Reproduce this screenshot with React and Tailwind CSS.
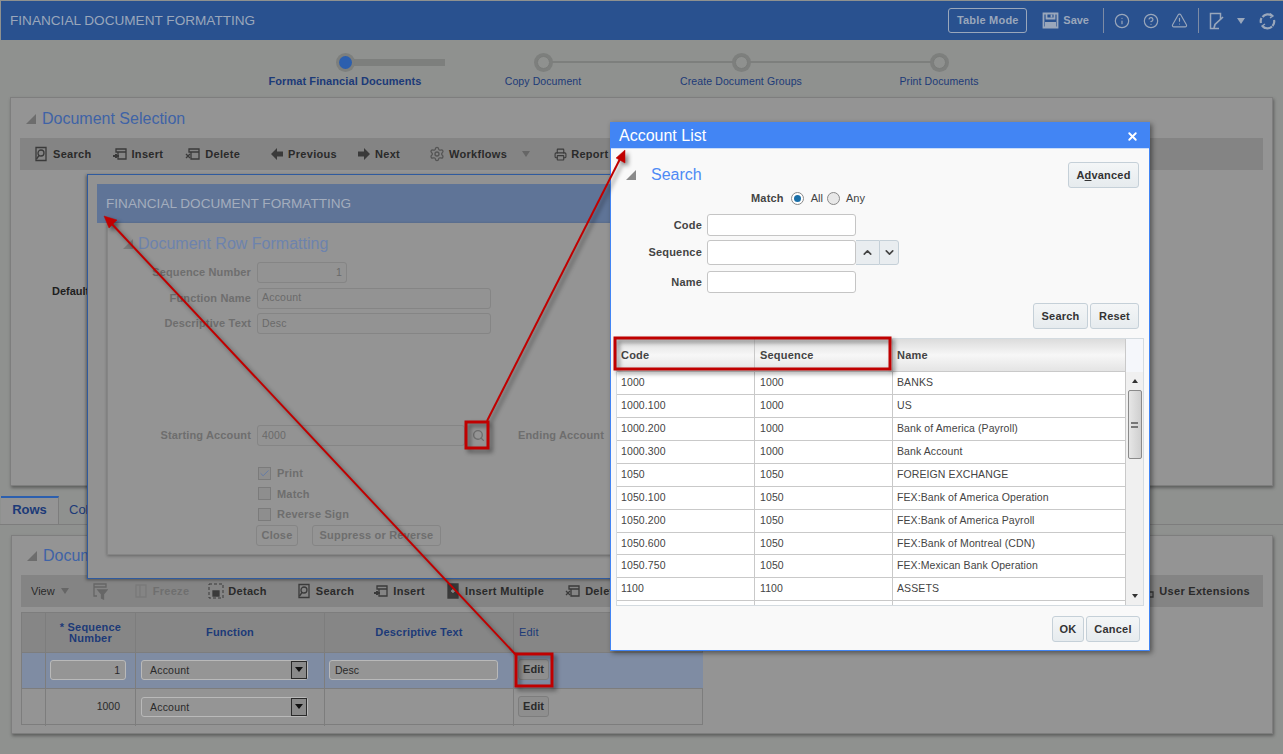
import React from "react";
import { Search, Info, CircleHelp, TriangleAlert, Printer, Settings, X, ChevronUp, ChevronDown, Check } from "lucide-react";

const Doc = ({ c = "#3a3a3a", kind = "search" }) => (
  <svg width="16" height="16" viewBox="0 0 16 16" fill="none" stroke={c} strokeWidth="1.3">
    {kind === "search" && <><path d="M3 1.5h10v13H3z" /><circle cx="8" cy="7" r="3" /><path d="M6 9.5l-2.5 3.5" /></>}
    {kind === "insert" && <><path d="M4 3h10v3H4zM6 6v7h8V6" /><path d="M1 10h6M4 8v4" strokeWidth="2" /></>}
    {kind === "delete" && <><path d="M4 3h10v3H4zM6 6v7h8V6" /><path d="M1 8l4 4M5 8l-4 4" /></>}
    {kind === "multi" && <><path d="M3 1h10v14H3z" fill={c} /><path d="M6 8h4M8 6v4" stroke="#949494" /></>}
    {kind === "detach" && <><path d="M1 1h14v14H1z" strokeDasharray="3 2" strokeWidth="1" /><path d="M5 8h6v5H5z" fill={c} /></>}
    {kind === "freeze" && <><path d="M3 2h10v12H3zM7 2v12" opacity=".5" /></>}
    {kind === "ext" && <><path d="M2 2h5v4H2zM8 9h6v5H8zM4 6v5h4" /></>}
  </svg>
);

const BlockArrow = ({ dir }) => (
  <svg width="14" height="14" viewBox="0 0 14 14" fill="#3a3a3a">
    {dir === "left" ? <path d="M1 7l6-6v3.5h6v5H7V13z" /> : <path d="M13 7L7 1v3.5H1v5h6V13z" />}
  </svg>
);

const Floppy = () => (
  <svg width="17" height="17" viewBox="0 0 17 17" fill="none" stroke="#9aa7bb" strokeWidth="1.8" className="ml-[15px]">
    <path d="M1.5 1.5h14v14h-14z" />
    <path d="M4.5 1.5v5h8v-5" />
    <path d="M3 10h11v5H3z" fill="#9aa7bb" stroke="none" />
    <path d="M9.5 2.5v3" />
  </svg>
);

const PenDoc = () => (
  <svg width="16" height="18" viewBox="0 0 16 18" fill="none" stroke="#9aa7bb" strokeWidth="1.5" className="ml-[10px]">
    <path d="M10 16.5H1.5v-15h10v6" />
    <path d="M5 16l1-3.5L14 5" strokeWidth="1.7" />
  </svg>
);

const Refresh = () => (
  <svg width="17" height="18" viewBox="0 0 17 18" fill="none" stroke="#9aa7bb" strokeWidth="2.2" className="ml-[14px]">
    <path d="M3.5 5A6.5 6.5 0 0 1 13 4M15 8a6.5 6.5 0 0 1-1.5 6M13 14.5A6.5 6.5 0 0 1 3.5 14M2 11a6.5 6.5 0 0 1 .5-5" />
    <path d="M11 1.5l3 2.5-3 2M6 16.5l-3-2.5 3-2" strokeWidth="1.4" />
  </svg>
);

const FilterDoc = () => (
  <svg width="15" height="17" viewBox="0 0 15 17" fill="none" stroke="#666666" strokeWidth="1.3" className="ml-[24px]">
    <path d="M1 1h12v3H1zM1 4v9h3" />
    <path d="M5 7h9l-3.5 4v5l-2-1v-4z" fill="#666666" />
  </svg>
);

const Tool = ({ icon, label, cls = "", dim = false }) => (
  <div className={`flex items-center gap-[4px] ${cls}`}>
    {icon}
    <span className={`text-[11px] font-bold tracking-[0.3px] ${dim ? "text-[#6f6f6f]" : "text-[#2a2a2a]"}`}>{label}</span>
  </div>
);

const Step = ({ label, active, line }) => (
  <div className="relative flex w-[198px] flex-col items-center">
    <div className="relative z-10 flex h-[19px] w-[19px] items-center justify-center rounded-full bg-[#7d7f7d]">
      <div className={`h-[13px] w-[13px] rounded-full ${active ? "bg-[#2c5fae]" : "border border-[#7a7c7a] bg-[#8f918f]"}`} />
    </div>
    {line && <div className="absolute left-[99px] top-[8px] h-[2px] w-[198px] bg-[#7d7f7d]" />}
    {active && <div className="absolute left-[99px] top-[6px] h-[7px] w-[100px] bg-[#7d7f7d]" />}
    <div className={`mt-[2px] whitespace-nowrap leading-[14px] text-[#1c3a78] ${active ? "text-[11px] font-bold tracking-[0.08px]" : "text-[10.5px] tracking-[0.1px]"}`}>{label}</div>
  </div>
);

const Tri = ({ c = "#6d6d6d" }) => <div className="h-0 w-0 border-l-[10px] border-l-transparent" style={{ borderBottom: `10px solid ${c}` }} />;

const GField = ({ label, v, w, right }) => (
  <div className="flex items-center">
    <div className="w-[149px] pr-[6px] text-right text-[11px] font-bold tracking-[0.15px] text-[#6e6e6e]">{label}</div>
    <div className={`flex h-[21px] items-center rounded-[3px] border border-[#858585] bg-[#939393] px-[4px] text-[10.5px] tracking-[0.2px] text-[#6a6a6a] ${w} ${right ? "justify-end" : ""}`}>{v}</div>
  </div>
);

const GCheck = ({ label, checked }) => (
  <div className="flex h-[20.5px] items-center gap-[6px]">
    <div className="flex h-[13px] w-[13px] items-center justify-center border border-[#7b7b7b] bg-[#8e8e8e]">{checked && <Check size={11} color="#6079a8" strokeWidth={2} />}</div>
    <span className="text-[11px] font-bold tracking-[0.2px] text-[#6e6e6e]">{label}</span>
  </div>
);

const Select = () => (
  <div className="flex h-[20px] w-[167px] items-stretch rounded-[3px] border border-[#b9b9b9] bg-[#959595]">
    <div className="flex-1 pl-[8px] text-[10.5px] leading-[18px] tracking-[0.2px] text-[#2a2a2a]">Account</div>
    <div className="flex w-[16px] items-center justify-center border border-[#2a2a2a] bg-[#8a8a8a]">
      <div className="h-0 w-0 border-x-[4px] border-t-[5px] border-x-transparent border-t-[#111111]" />
    </div>
  </div>
);

const HCell = ({ children, cls = "" }) => (
  <div className={`flex items-center justify-center border-r border-[#7d7d7d] text-center text-[11px] font-bold leading-[11px] tracking-[0.2px] text-[#1c3a78] ${cls}`}>{children}</div>
);

const MBtn = ({ children, cls = "" }) => (
  <button className={`flex h-[26px] items-center justify-center rounded-[3px] border border-[#c5d0d8] bg-gradient-to-b from-[#f4f6f7] to-[#e6ebee] text-[11px] font-bold tracking-[0.2px] text-[#333333] ${cls}`}>{children}</button>
);

const MField = ({ label, h = "h-[22px]" }) => (
  <div className="flex items-center">
    <div className="w-[96px] pr-[5px] text-right text-[11px] font-bold tracking-[0.2px] text-[#444444]">{label}</div>
    <div className={`w-[149px] rounded-[3px] border border-[#c5c5c5] bg-white ${h}`} />
  </div>
);

const rows = [
  ["1000", "1000", "BANKS"],
  ["1000.100", "1000", "US"],
  ["1000.200", "1000", "Bank of America (Payroll)"],
  ["1000.300", "1000", "Bank Account"],
  ["1050", "1050", "FOREIGN EXCHANGE"],
  ["1050.100", "1050", "FEX:Bank of America Operation"],
  ["1050.200", "1050", "FEX:Bank of America Payroll"],
  ["1050.600", "1050", "FEX:Bank of Montreal (CDN)", true],
  ["1050.750", "1050", "FEX:Mexican Bank Operation"],
  ["1100", "1100", "ASSETS"],
];

export default function App() {
  return (
    <div className="relative h-[754px] w-[1283px] overflow-hidden bg-[#8f918f] font-['Liberation_Sans',Arial,sans-serif]">
      {/* header */}
      <div className="mt-[1px] ml-[1px] flex h-[39px] items-center bg-[#29518f] pl-[9px] pr-[7px]">
        <div className="pt-[2px] text-[13.6px] text-[#9aa7bb]">FINANCIAL DOCUMENT FORMATTING</div>
        <div className="ml-auto flex items-center text-[#9aa7bb]">
          <div className="flex h-[25px] w-[79px] items-center justify-center rounded-[3px] border border-[#9aa7bb] text-[11px] font-bold tracking-[0.2px]">Table Mode</div>
          <Floppy />
          <span className="ml-[4px] text-[11px] font-bold">Save</span>
          <div className="ml-[14px] h-[25px] w-px bg-[#7c8ba5]" />
          <Info size={16} strokeWidth={1.8} className="ml-[10px]" />
          <CircleHelp size={16} strokeWidth={1.8} className="ml-[13px]" />
          <TriangleAlert size={17} strokeWidth={1.6} className="ml-[12px]" />
          <div className="ml-[10px] h-[25px] w-px bg-[#7c8ba5]" />
          <PenDoc />
          <div className="ml-[12px] h-0 w-0 border-x-[4px] border-t-[6px] border-x-transparent border-t-[#9aa7bb]" />
          <Refresh />
        </div>
      </div>
      {/* stepper */}
      <div className="flex h-[57px] pl-[246px] pt-[13px]">
        <Step label="Format Financial Documents" active />
        <Step label="Copy Document" line />
        <Step label="Create Document Groups" line />
        <Step label="Print Documents" />
      </div>
      {/* selection panel */}
      <div className="ml-[10px] h-[389px] w-[1263px] border border-[#7e7e7e] bg-[#949494] px-[9px] shadow-[1px_2px_3px_rgba(0,0,0,0.35)]">
        <div className="flex h-[40px] items-center gap-[6px] pl-[6px] pt-[1px]">
          <Tri />
          <div className="text-[16px] text-[#3f63a6]">Document Selection</div>
        </div>
        <div className="flex h-[32px] items-center bg-[#848484] pl-[13px]">
          <Tool icon={<Doc />} label="Search" />
          <Tool icon={<Doc kind="insert" />} label="Insert" cls="ml-[20px]" />
          <Tool icon={<Doc kind="delete" />} label="Delete" cls="ml-[22px]" />
          <Tool icon={<BlockArrow dir="left" />} label="Previous" cls="ml-[30px]" />
          <Tool icon={<BlockArrow dir="right" />} label="Next" cls="ml-[20px]" />
          <Tool icon={<Settings size={16} color="#555555" />} label="Workflows" cls="ml-[29px]" />
          <div className="ml-[15px] h-0 w-0 border-x-[4px] border-t-[6px] border-x-transparent border-t-[#666666]" />
          <Tool icon={<Printer size={13} color="#3a3a3a" />} label="Report Options" cls="ml-[24px]" />
        </div>
        <div className="ml-[32px] mt-[113px] text-[11px] font-bold text-[#1e1e1e]">Default</div>
      </div>
      {/* tabs */}
      <div className="mt-[10px] flex h-[29px] border-b border-[#7d7d7d]">
        <div className="ml-[1px] flex w-[58px] items-center justify-center border-r border-t-2 border-[#7d7d7d] border-t-[#2c5fae] bg-[#949494] pb-[2px] text-[13px] font-bold text-[#1c3a78]">Rows</div>
        <div className="flex w-[100px] items-center pb-[1px] pl-[10px] text-[13px] text-[#1c3a78]">Columns</div>
      </div>
      {/* rows panel */}
      <div className="ml-[11px] mt-[10px] h-[199px] w-[1262px] border border-[#7e7e7e] bg-[#949494] pl-[9px] pr-[9px] shadow-[1px_2px_3px_rgba(0,0,0,0.35)]">
        <div className="flex h-[39px] items-center gap-[6px] pl-[6px]">
          <Tri />
          <div className="text-[16px] text-[#3f63a6]">Document Row Formatting</div>
        </div>
        <div className="flex h-[32px] items-center bg-[#848484] pl-[10px]">
          <span className="text-[11px] text-[#2a2a2a]">View</span>
          <div className="ml-[6px] h-0 w-0 border-x-[4px] border-t-[6px] border-x-transparent border-t-[#666666]" />
          <FilterDoc />
          <Tool icon={<Doc kind="freeze" c="#6f6f6f" />} label="Freeze" dim cls="ml-[25px]" />
          <Tool icon={<Doc kind="detach" />} label="Detach" cls="ml-[19px]" />
          <Tool icon={<Doc />} label="Search" cls="ml-[29px]" />
          <Tool icon={<Doc kind="insert" />} label="Insert" cls="ml-[19px]" />
          <Tool icon={<Doc kind="multi" />} label="Insert Multiple" cls="ml-[20px]" />
          <Tool icon={<Doc kind="delete" />} label="Delete" cls="ml-[21px]" />
          <Tool icon={<Doc kind="ext" />} label="User Extensions" cls="ml-auto mr-[13px]" />
        </div>
        <div className="mt-[5px] grid h-[113px] w-[682px] grid-cols-[24px_90px_189px_189px_189px] grid-rows-[40px_36px_37px] border border-[#7d7d7d]">
          <HCell cls="border-b bg-[#868686]" />
          <HCell cls="border-b bg-[#868686]"><span>* Sequence<br />Number</span></HCell>
          <HCell cls="border-b bg-[#868686]">Function</HCell>
          <HCell cls="border-b bg-[#868686]">Descriptive Text</HCell>
          <HCell cls="justify-start! border-b bg-[#868686] pl-[5px] font-normal!">Edit</HCell>

          <div className="border-r border-b border-[#7d7d7d] bg-[#7f8ca3]" />
          <div className="flex items-center border-r border-b border-[#7d7d7d] bg-[#7f8ca3] pb-[2px] pl-[4px]">
            <div className="h-[20px] w-[76px] rounded-[3px] border border-[#b9b9b9] bg-[#959595] pr-[5px] text-right text-[10.5px] leading-[18px] text-[#2a2a2a]">1</div>
          </div>
          <div className="flex items-center border-r border-b border-[#7d7d7d] bg-[#7f8ca3] pb-[2px] pl-[5px]"><Select /></div>
          <div className="flex items-center border-r border-b border-[#7d7d7d] bg-[#7f8ca3] pb-[2px] pl-[4px]">
            <div className="h-[20px] w-[169px] rounded-[3px] border border-[#b9b9b9] bg-[#959595] pl-[5px] text-[10.5px] leading-[18px] text-[#2a2a2a]">Desc</div>
          </div>
          <div className="flex items-center border-b border-[#7d7d7d] bg-[#7f8ca3] pb-[2px] pl-[4px]">
            <div className="flex h-[21px] w-[31px] items-center justify-center rounded-[3px] border border-[#7d7d7d] bg-[#8e8e8e] text-[11px] font-bold text-[#2a2a2a]">Edit</div>
          </div>

          <div className="border-r border-[#7d7d7d]" />
          <div className="flex items-center justify-end border-r border-[#7d7d7d] pb-[2px] pr-[15px] text-[10.5px] text-[#2a2a2a]">1000</div>
          <div className="flex items-center border-r border-[#7d7d7d] pb-[2px] pl-[5px]"><Select /></div>
          <div className="border-r border-[#7d7d7d]" />
          <div className="flex items-center pb-[2px] pl-[4px]">
            <div className="flex h-[21px] w-[31px] items-center justify-center rounded-[3px] border border-[#7d7d7d] bg-[#8e8e8e] text-[11px] font-bold text-[#2a2a2a]">Edit</div>
          </div>
        </div>
      </div>

      {/* underlying popup */}
      <div className="absolute left-[87px] top-[174px] h-[405px] w-[560px] border border-[#2f5a9e] bg-[#929292] pl-[9px] pt-[9px] shadow-[-1px_1px_3px_rgba(0,0,0,0.4)]">
        <div className="flex h-[39px] items-center bg-[#5f7497] pl-[9px] pt-[2px] text-[13.6px] text-[#a3adbd]">FINANCIAL DOCUMENT FORMATTING</div>
        <div className="ml-[10px] h-[332px] border-l border-b border-[#858585] bg-[#949494] shadow-[0_1px_3px_rgba(0,0,0,0.3)]">
          <div className="flex h-[39px] items-center gap-[5px] pl-[15px] pt-[2px]">
            <Tri c="#7a7a7a" />
            <div className="text-[16px] text-[#6d83ad]">Document Row Formatting</div>
          </div>
          <div className="flex flex-col gap-[4.5px]">
            <GField label="Sequence Number" v="1" w="w-[90px]" right />
            <GField label="Function Name" v="Account" w="w-[234px]" />
            <GField label="Descriptive Text" v="Desc" w="w-[234px]" />
          </div>
          <div className="mt-[91px] flex items-center">
            <GField label="Starting Account" v="4000" w="w-[208px]" />
            <Search size={13} color="#6e6e6e" strokeWidth={2.5} className="ml-[7px]" />
            <div className="ml-[33px] text-[11px] font-bold tracking-[0.15px] text-[#6e6e6e]">Ending Account</div>
          </div>
          <div className="ml-[150px] mt-[17px] flex flex-col">
            <GCheck label="Print" checked />
            <GCheck label="Match" />
            <GCheck label="Reverse Sign" />
          </div>
          <div className="ml-[148px] flex gap-[14px]">
            <div className="flex h-[21px] w-[42px] items-center justify-center rounded-[3px] border border-[#858585] text-[11px] font-bold tracking-[0.2px] text-[#6e6e6e]">Close</div>
            <div className="flex h-[21px] w-[129px] items-center justify-center rounded-[3px] border border-[#858585] text-[11px] font-bold tracking-[0.2px] text-[#6e6e6e]">Suppress or Reverse</div>
          </div>
        </div>
      </div>

      {/* modal */}
      <div className="absolute left-[610px] top-[122px] flex h-[529px] w-[540px] flex-col border border-[#4285f4] border-t-0 bg-[#f9f9f9] shadow-[2px_2px_5px_rgba(0,0,0,0.45)]">
        <div className="flex h-[27px] shrink-0 items-center justify-between border-b border-[#c9dcf9] bg-[#4285f4] pl-[8px] pr-[10px] pt-[2px] text-[16px] text-white">
          Account List
          <X size={13} strokeWidth={3.5} color="#ffffff" />
        </div>
        <div className="h-[189px] shrink-0">
          <div className="mt-[13px] flex h-[26px] items-center justify-between pl-[15px] pr-[10px]">
            <div className="flex items-center gap-[15px]">
              <Tri c="#8b8b8b" />
              <div className="text-[16px] text-[#4e8af5]">Search</div>
            </div>
            <MBtn cls="w-[71px]"><span>A<span className="underline">d</span>vanced</span></MBtn>
          </div>
          <div className="ml-[140px] mt-[2px] flex h-[16px] items-center text-[11px] text-[#444444]">
            <span className="font-bold tracking-[0.2px]">Match</span>
            <div className="ml-[7px] flex h-[13px] w-[13px] items-center justify-center rounded-full border border-[#8a8a8a] bg-white"><div className="h-[7px] w-[7px] rounded-full bg-[#1a6fa8]" /></div>
            <span className="ml-[7px]">All</span>
            <div className="ml-[4px] h-[13px] w-[13px] rounded-full border border-[#8a8a8a] bg-[#e8e8e8]" />
            <span className="ml-[6px]">Any</span>
          </div>
          <div className="mt-[8px]"><MField label="Code" /></div>
          <div className="mt-[4px] flex items-center">
            <MField label="Sequence" h="h-[25px]" />
            <div className="flex h-[25px] w-[23px] items-center justify-center border-y border-[#c5d0d8] bg-[#e9edf0]"><ChevronUp size={13} strokeWidth={3} color="#444444" /></div>
            <div className="flex h-[25px] w-[20px] items-center justify-center rounded-r-[3px] border border-[#c5d0d8] bg-[#e9edf0]"><ChevronDown size={13} strokeWidth={3} color="#444444" /></div>
          </div>
          <div className="mt-[6px]"><MField label="Name" /></div>
          <div className="mt-[10px] flex justify-end gap-[2px] pr-[10px]">
            <MBtn cls="w-[55px]">Search</MBtn>
            <MBtn cls="w-[49px]">Reset</MBtn>
          </div>
        </div>
        <div className="ml-[5px] h-[268px] w-[528px] shrink-0 border border-[#d4dbe0]">
          <div className="flex h-[33px] text-[11px] font-bold tracking-[0.2px] text-[#444444]">
            <div className="flex w-[138px] items-center border-r border-b border-[#c9c9c9] bg-gradient-to-b from-[#dcdcdc] via-[#f7f7f7] to-[#e4e4e4] pl-[4px]">Code</div>
            <div className="flex w-[138px] items-center border-r border-b border-[#c9c9c9] bg-gradient-to-b from-[#dcdcdc] via-[#f7f7f7] to-[#e4e4e4] pl-[5px]">Sequence</div>
            <div className="flex w-[233px] items-center border-r border-b border-[#c9c9c9] bg-gradient-to-b from-[#dcdcdc] via-[#f7f7f7] to-[#e4e4e4] pl-[4px]">Name</div>
            <div className="flex-1 bg-[#f5f7fb]" />
          </div>
          <div className="flex h-[233px]">
            <div className="w-[509px] overflow-hidden bg-white">
              {rows.map((r) => (
                <div key={r[0]} className={`flex border-b border-[#c9c9c9] text-[10.5px] leading-[21px] tracking-[0.1px] text-[#444444] ${r[3] ? "h-[22px]" : "h-[23px]"}`}>
                  <div className="w-[138px] border-r border-[#c9c9c9] pl-[4px]">{r[0]}</div>
                  <div className="w-[138px] border-r border-[#c9c9c9] pl-[5px]">{r[1]}</div>
                  <div className="w-[233px] border-r border-[#c9c9c9] pl-[4px]">{r[2]}</div>
                </div>
              ))}
              <div className="flex h-[10px]">
                <div className="w-[138px] border-r border-[#c9c9c9]" />
                <div className="w-[138px] border-r border-[#c9c9c9]" />
                <div className="w-[233px] border-r border-[#c9c9c9]" />
              </div>
            </div>
            <div className="flex flex-1 flex-col items-center bg-[#f0f0f0] pt-[7px]">
              <div className="h-0 w-0 border-x-[3px] border-b-[4px] border-x-transparent border-b-[#333333]" />
              <div className="mt-[7px] flex h-[69px] w-[14px] items-center justify-center rounded-[2px] border border-[#8a8a8a] bg-gradient-to-r from-[#e6e6e6] to-[#cfcfcf]">
                <div className="h-[6px] w-[7px] border-y-2 border-[#777777]" />
              </div>
              <div className="mt-auto mb-[7px] h-0 w-0 border-x-[3px] border-t-[4px] border-x-transparent border-t-[#333333]" />
            </div>
          </div>
        </div>
        <div className="mt-[10px] flex justify-end gap-[2px] pr-[9px]">
          <MBtn cls="w-[32px]">OK</MBtn>
          <MBtn cls="w-[54px]">Cancel</MBtn>
        </div>
      </div>

      {/* annotation */}
      <svg className="pointer-events-none absolute left-0 top-0 drop-shadow-[3px_3px_2px_rgba(0,0,0,0.45)]" width="1283" height="754" fill="none" stroke="#c00000">
        <path d="M516 655L110 222" strokeWidth="2" />
        <path d="M104 216l13 4-8 8z" fill="#c00000" strokeWidth="0.5" />
        <path d="M487 421L621 157" strokeWidth="2" />
        <path d="M625 150l0 13-9-5z" fill="#c00000" strokeWidth="0.5" />
        <rect x="466" y="422" width="22" height="26" strokeWidth="3" />
        <rect x="516" y="654" width="36" height="32" strokeWidth="3" />
        <rect x="615" y="338" width="275" height="31" strokeWidth="3" />
      </svg>
    </div>
  );
}
